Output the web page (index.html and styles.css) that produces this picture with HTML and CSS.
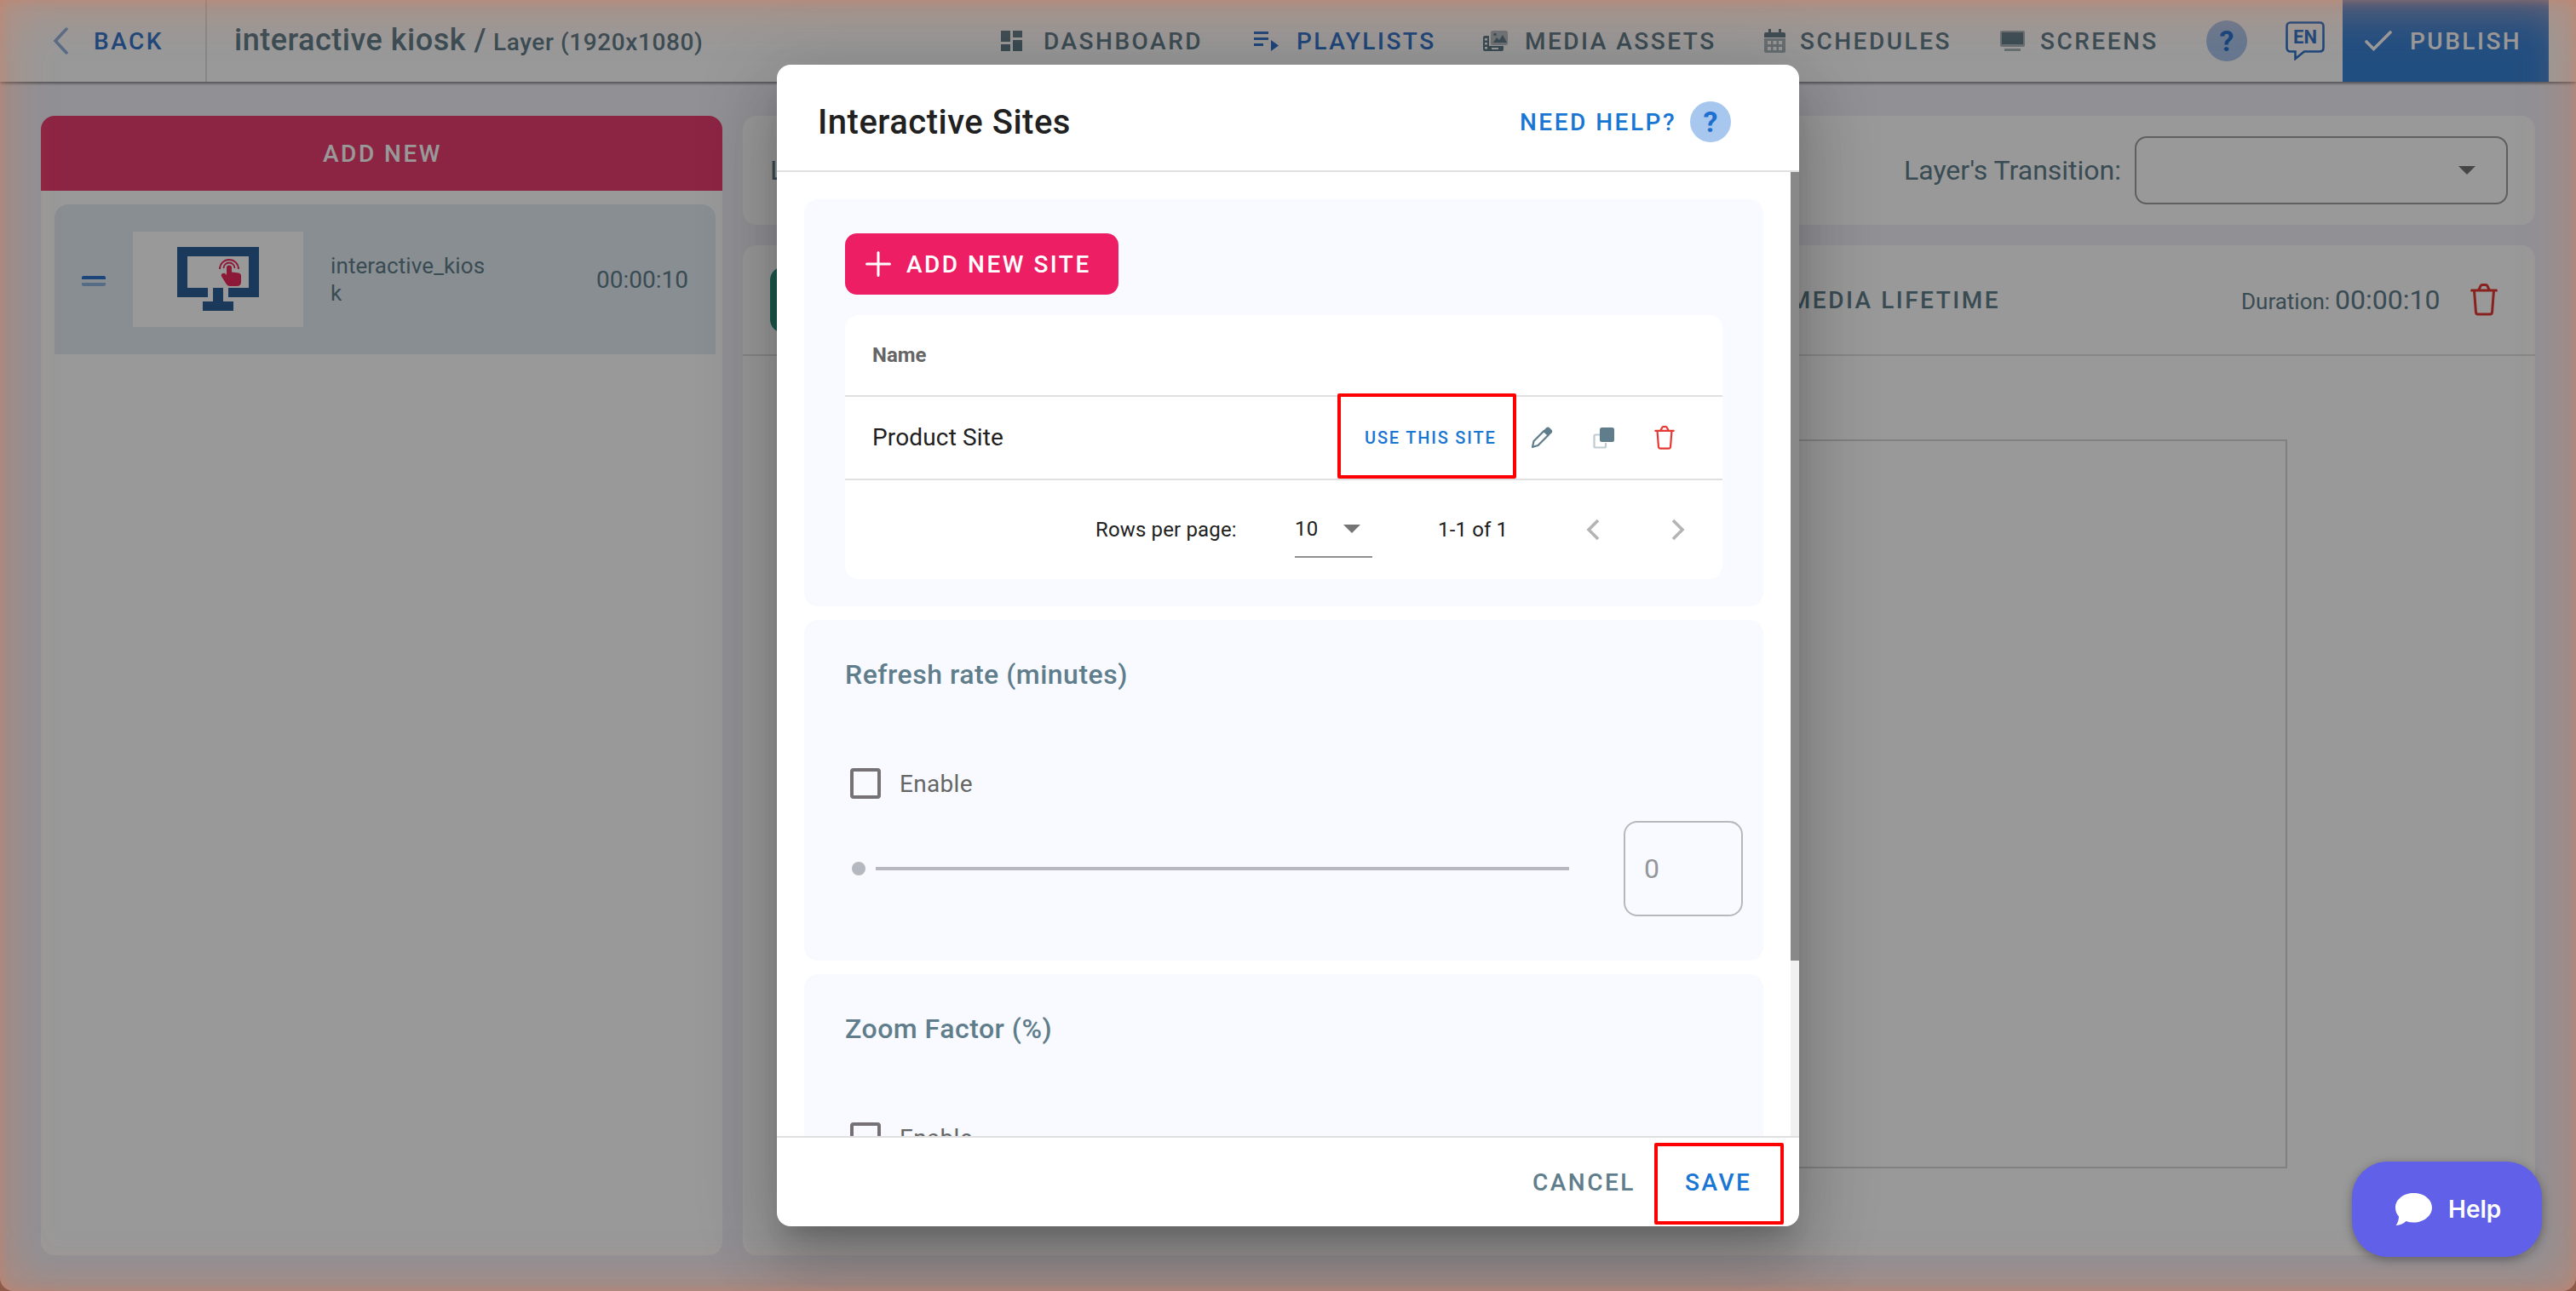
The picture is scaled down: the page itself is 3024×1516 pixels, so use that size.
FILE: index.html
```html
<!DOCTYPE html>
<html lang="en">
<head>
<meta charset="utf-8">
<title>Interactive Sites</title>
<link rel="stylesheet" href="styles.css">
</head>
<body>
<svg class="defs" width="0" height="0">
  <symbol id="trash" viewBox="0 0 32 38"><path d="M1.5 8h29M4.500 8l2 26a2.500 2.500 0 0 0 2.500 2h14a2.500 2.500 0 0 0 2.500-2l2-26M10 7l2-4q.6-1.500 2-1.500h4q1.400 0 2 1.500l2 4" fill="none" stroke="currentColor" stroke-width="3" stroke-linecap="round"/></symbol>
</svg>
<div class="app">
  <header class="topbar">
    <div class="back"><svg width="18" height="32" viewBox="0 0 18 32"><path d="M16 2L3 16l13 14" fill="none" stroke="#8fb3de" stroke-width="3.500" stroke-linecap="round"/></svg><span>BACK</span></div>
    <div class="crumb"><span class="crumb-main">interactive kiosk /</span><span class="crumb-sub">Layer (1920x1080)</span></div>
    <nav class="nav">
      <div class="nav-item"><span class="nav-icon"><svg width="25" height="24" viewBox="0 0 25 24" fill="#607d8b"><path d="M0 0h11v13H0zM0 16h11v8H0zM14 0h11v8H14zM14 11h11v13H14z"/></svg></span>DASHBOARD</div>
      <div class="nav-item active"><span class="nav-icon"><svg width="30" height="24" viewBox="0 0 30 24" fill="#2f74cc"><path d="M0 1h17v3H0zM0 8h17v3H0zM0 15h11v3H0zM20 11l9 6.500-9 6.500z"/></svg></span>PLAYLISTS</div>
      <div class="nav-item"><span class="nav-icon"><svg width="30" height="26" viewBox="0 0 30 26"><rect x="10" y="1" width="20" height="17" rx="2.500" fill="#b4c1c7"/><path d="M13 15l4-6 3 3 4-6 5 9z" fill="#607d8b"/><circle cx="15" cy="5.500" r="1.800" fill="#607d8b"/><path fill-rule="evenodd" d="M3 7h5v12h17v4q0 2-2 2H3q-2 0-2-2V9q0-2 2-2zM3 10v2.500h3V10zM3 15v2.500h3V15zM3 20v2.500h3V20zM11 21v2h8v-2z" fill="#607d8b"/></svg></span>MEDIA ASSETS</div>
      <div class="nav-item"><span class="nav-icon cal"><svg width="25" height="28" viewBox="0 0 25 28"><path d="M5 0h3v4h9V0h3v4h3q2 0 2 2v4H0V6q0-2 2-2h3z" fill="#607d8b"/><path d="M0 11h25v15q0 2-2 2H2q-2 0-2-2z" fill="#a9b8bf"/><path d="M4 14h4v4H4zM10.500 14h4v4h-4zM17 14h4v4h-4zM4 21h4v4H4zM10.500 21h4v4h-4zM17 21h4v4h-4z" fill="#fff"/></svg></span>SCHEDULES</div>
      <div class="nav-item"><span class="nav-icon screen"><svg width="31" height="24" viewBox="0 0 31 24"><rect x="1" y="0" width="29" height="19" rx="2" fill="#a9b8bf"/><rect x="3" y="2" width="25" height="14" fill="#607d8b"/><path d="M6 21h19v3H6z" fill="#a9b8bf"/></svg></span>SCREENS</div>
    </nav>
    <div class="round-help">?</div>
    <div class="lang"><svg width="46" height="46" viewBox="0 0 46 46"><path d="M6 1.500h34q4.500 0 4.500 4.500v25q0 4.500-4.500 4.500H22L11.500 44v-8.500H6Q1.500 35.500 1.500 31V6Q1.500 1.500 6 1.500z" fill="none" stroke="#2f74cc" stroke-width="2.600"/></svg><span>EN</span></div>
    <div class="publish"><svg width="32" height="24" viewBox="0 0 32 24"><path d="M2 13l8.500 8.500L30 2" fill="none" stroke="#fff" stroke-width="3.600" stroke-linecap="round"/></svg><span>PUBLISH</span></div>
  </header>
  <main class="work">
    <aside class="side">
      <div class="add-new">ADD NEW</div>
      <div class="media-item">
        <span class="grip"></span>
        <span class="thumb"><svg width="96" height="75" viewBox="0 0 96 75"><path fill-rule="evenodd" fill="#2d6198" d="M0 0h96v59H60V48h24V11H12v37h24v11H0z"/><path fill="#2d6198" d="M42 48h12v16h12v11H30V64h12z"/><path d="M58 33q-2-3-4.500-2t-1.500 3.500l5 8q2 3.500 5 3.500h8q5 0 5-5v-7q0-3-3-3.500l-8-1V24q0-2.500-3-2.500t-3 2.500z" fill="#ea2a5c"/><path d="M50 26a11 11 0 1 1 22 0M54.500 25a6.500 6.500 0 1 1 13 0" fill="none" stroke="#ea2a5c" stroke-width="1.800"/></svg></span>
        <span class="media-name">interactive_kios<br>k</span>
        <span class="media-time">00:00:10</span>
      </div>
    </aside>
    <section class="stage">
      <div class="bar layer-bar">
        <span class="layer-name">Layer</span>
        <span class="trans-label">Layer's Transition:</span>
        <span class="trans-select"><i class="caret"></i></span>
      </div>
      <div class="canvas-panel">
        <div class="bar media-bar">
          <span class="teal-btn"></span>
          <span class="lifetime">MEDIA LIFETIME</span>
          <span class="dur-label">Duration:</span>
          <span class="dur-value">00:00:10</span>
          <svg class="red" width="32" height="38"><use href="#trash"/></svg>
        </div>
        <div class="canvas"></div>
      </div>
    </section>
  </main>
</div>
<div class="scrim"></div>
<div class="dialog">
  <div class="dialog-head">
    <h1>Interactive Sites</h1>
    <span class="need">NEED HELP?</span>
    <span class="round-help">?</span>
  </div>
  <div class="dialog-body">
    <div class="cards">
      <section class="card sites">
        <button class="add-site"><svg width="30" height="30" viewBox="0 0 30 30"><path d="M15 1.500v27M1.500 15h27" stroke="#fff" stroke-width="3" stroke-linecap="round"/></svg>ADD NEW SITE</button>
        <div class="table">
          <div class="thead">Name</div>
          <div class="trow">
            <span class="site-name">Product Site</span>
            <span class="use">USE THIS SITE</span>
            <svg class="pencil" width="26" height="26" viewBox="0 0 26 26"><path d="M2 24l1.500-7L15.500 5l5 5L8.500 22z" fill="none" stroke="#607d8b" stroke-width="2.200" stroke-linejoin="round"/><path d="M14.500 5l3.500-3.500q2-2 4.200 0l2 2.100q2 2.100 0 4.100L20.500 11z" fill="#607d8b"/></svg>
            <svg class="copy" width="25" height="26" viewBox="0 0 25 26"><path d="M8 9.500H3q-1.500 0-1.500 1.500v12q0 1.500 1.500 1.500h10.500q1.500 0 1.500-1.500v-4" fill="none" stroke="#bfcbd1" stroke-width="2.200"/><rect x="8" y="1" width="17" height="17" rx="2.500" fill="#607d8b"/></svg>
            <svg class="red" width="24" height="28"><use href="#trash"/></svg>
          </div>
          <div class="pager">
            <span class="rpp">Rows per page:</span>
            <span class="rpp-select">10<i class="caret"></i></span>
            <span class="range">1-1 of 1</span>
            <svg class="prev" width="16" height="26" viewBox="0 0 16 26"><path d="M14 2L3 13l11 11" fill="none" stroke="#b4b4b4" stroke-width="3.600"/></svg>
            <svg class="next" width="16" height="26" viewBox="0 0 16 26"><path d="M2 2l11 11L2 24" fill="none" stroke="#b4b4b4" stroke-width="3.600"/></svg>
          </div>
        </div>
      </section>
      <section class="card">
        <h2>Refresh rate (minutes)</h2>
        <label class="check"><i></i>Enable</label>
        <div class="slider"><i class="knob"></i><i class="track"></i><span class="num">0</span></div>
      </section>
      <section class="card">
        <h2>Zoom Factor (%)</h2>
        <label class="check"><i></i>Enable</label>
      </section>
    </div>
    <div class="scrollbar"><i></i></div>
  </div>
  <div class="dialog-foot"><span class="cancel">CANCEL</span><span class="save">SAVE</span></div>
  <i class="mark mark-use"></i>
  <i class="mark mark-save"></i>
</div>
<div class="glow"></div>
<div class="help-fab"><svg width="43" height="38" viewBox="0 0 43 38"><path d="M21.500 0C33.500 0 43 7.500 43 17S33.500 34.500 21.500 34.500q-5 0-9-1.500Q8 37.500.500 38q3.500-4.500 3.500-10.500Q0 23 0 17C0 7.500 9.500 0 21.500 0z" fill="#fff"/></svg><span>Help</span></div>
</body>
</html>
```
FILE: styles.css
```css
* { box-sizing: border-box; }
body { margin: 0; width: 3024px; height: 1516px; overflow: hidden; position: relative; font-family: Roboto, sans-serif; color: #607d8b; background: #f1f1f9; }
span, i { display: block; white-space: nowrap; }
svg { flex: none; display: block; }
h1, h2 { margin: 0; font-weight: 500; white-space: nowrap; }
.defs { position: absolute; }
.red { color: #e53935; }

.app { height: 1516px; display: flex; flex-direction: column; }
.topbar { height: 96px; flex: none; display: flex; align-items: center; background: #fff; box-shadow: 0 2px 3px rgba(0,0,0,.45); font-size: 28px; font-weight: 500; letter-spacing: 2.5px; }
.back { width: 243px; height: 96px; display: flex; align-items: center; gap: 30px; padding-left: 62px; border-right: 2px solid #e0e0e0; color: #2f74cc; }
.crumb { width: 932px; display: flex; align-items: baseline; gap: 8px; padding-left: 32px; margin-top: -2px; }
.crumb-main { font-size: 36px; font-weight: 500; letter-spacing: .5px; }
.crumb-sub { font-size: 28px; font-weight: 500; letter-spacing: .6px; }
.nav { width: 1415px; display: grid; grid-template-columns: 297px 268px 323px 282px 245px; }
.nav-item { display: flex; align-items: center; white-space: nowrap; }
.nav-icon { width: 50px; }
.nav-icon.cal { padding-left: 8px; }
.nav-icon.screen { padding-left: 2px; }
.active { color: #2f74cc; }
.round-help { width: 48px; height: 48px; border-radius: 50%; background: #a8c7ee; color: #1e6fd0; font: 700 34px/48px Roboto, sans-serif; text-align: center; letter-spacing: 0; }
.lang { width: 46px; height: 46px; margin-left: 45px; position: relative; }
.lang span { position: absolute; inset: 0 0 auto 0; text-align: center; color: #2f74cc; font-size: 22px; line-height: 37px; letter-spacing: 0; font-weight: 700; }
.publish { width: 242px; height: 96px; margin-left: 21px; padding-left: 26px; display: flex; align-items: center; gap: 21px; background: #3883d6; color: #fff; }

.work { flex: 1; display: flex; gap: 24px; padding: 40px 48px 42px; }
.side { width: 800px; background: #fff; border-radius: 16px; overflow: hidden; }
.add-new { height: 88px; line-height: 89px; text-align: center; background: #e93f70; color: #fff; font-size: 28px; font-weight: 500; letter-spacing: 2.5px; padding-left: 2px; }
.media-item { margin: 16px 8px 0 16px; height: 176px; background: #e5edf3; border-radius: 16px 16px 0 0; display: flex; align-items: center; }
.grip { width: 28px; height: 12px; margin: 3px 0 0 32px; border-top: 4px solid #2f74cc; border-bottom: 4px solid #8fb3de; border-radius: 2px; }
.thumb { width: 200px; height: 112px; margin-left: 32px; background: #fff; display: flex; justify-content: center; padding-top: 18px; }
.media-name { width: 312px; margin-left: 32px; font-size: 26px; line-height: 32px; letter-spacing: .1px; }
.media-time { font-size: 28px; }
.stage { flex: 1; display: flex; flex-direction: column; gap: 24px; }
.bar { height: 128px; display: flex; align-items: center; }
.layer-bar { background: #fff; border-radius: 16px; padding: 0 32px; font-size: 32px; }
.layer-name { width: 1331px; }
.trans-label { width: 271px; }
.trans-select { width: 438px; height: 80px; border: 2px solid #9e9e9e; border-radius: 14px; display: flex; align-items: center; justify-content: flex-end; padding-right: 36px; }
.caret { border: 10px solid transparent; border-top-color: #757575; border-bottom: 0; }
.canvas-panel { flex: 1; background: #fff; border-radius: 16px; }
.media-bar { height: 130px; border-bottom: 2px solid #e0e0e0; padding-left: 32px; }
.teal-btn { width: 400px; height: 78px; background: #309682; border-radius: 16px; }
.lifetime { width: 1060px; text-align: right; margin: 0 283px 0 -16px; font-size: 28px; font-weight: 500; letter-spacing: 2.5px; }
.dur-label { width: 110px; font-size: 26px; margin-top: 4px; }
.dur-value { width: 159px; font-size: 32px; }
.canvas { width: 1524px; height: 856px; margin: 98px 0 0 289px; border: 2px solid #d8d8d8; }

.scrim { position: absolute; inset: 0; background: rgba(0,0,0,.4); }
.glow { position: absolute; inset: 0; pointer-events: none; border-radius: 0 0 16px 16px; box-shadow: 0 0 0 20px #8f5a48, inset 0 0 12px rgba(210,125,95,.5), inset 0 0 60px rgba(210,130,100,.65); }

.dialog { position: absolute; left: 912px; top: 76px; width: 1200px; height: 1364px; background: #fff; border-radius: 16px; display: flex; flex-direction: column; box-shadow: 0 22px 30px -14px rgba(0,0,0,.2), 0 48px 76px 6px rgba(0,0,0,.14), 0 18px 92px 16px rgba(0,0,0,.12); }
.dialog-head { height: 126px; flex: none; display: flex; align-items: center; padding: 10px 80px 0 48px; border-bottom: 2px solid #e0e0e0; }
.dialog-head h1 { flex: 1; color: #212121; font-size: 40px; letter-spacing: .5px; }
.need { width: 200px; color: #1976d2; font-size: 28px; font-weight: 500; letter-spacing: 2.5px; }
.dialog-body { height: 1132px; flex: none; display: flex; overflow: hidden; }
.cards { width: 1190px; padding: 32px 32px 0; display: flex; flex-direction: column; gap: 16px; }
.card { height: 400px; flex: none; background: #f8faff; border-radius: 16px; padding: 45px 48px; }
.sites { height: 478px; padding: 40px 48px; }
.add-site { display: flex; align-items: center; gap: 18px; width: 321px; height: 72px; padding: 0 0 0 24px; margin: 0 0 24px; border: 0; border-radius: 14px; background: #ee1e64; color: #fff; font: 500 28px Roboto, sans-serif; letter-spacing: 2.5px; white-space: nowrap; }
.table { width: 1030px; height: 310px; background: #fff; border-radius: 16px; }
.thead { height: 96px; line-height: 94px; padding-left: 32px; border-bottom: 2px solid #e0e0e0; font-size: 24px; font-weight: 700; color: #666; }
.trow { height: 98px; display: flex; align-items: center; padding-left: 32px; border-bottom: 2px solid #e0e0e0; }
.site-name { width: 578px; margin-top: -1px; font-size: 28px; letter-spacing: .15px; color: #212121; }
.use { width: 195px; color: #1976d2; font-size: 20px; font-weight: 500; letter-spacing: 1.8px; }
.pencil { margin-right: 47px; }
.copy { margin-right: 47px; }
.pager { height: 116px; display: flex; align-items: center; padding-left: 294px; font-size: 24px; letter-spacing: .15px; color: #212121; }
.rpp { width: 234px; }
.rpp-select { width: 91px; height: 66px; display: flex; align-items: center; gap: 30px; border-bottom: 2px solid #909090; }
.range { width: 174px; margin-left: 77px; }
.prev { margin-right: 84px; }
.card h2 { height: 38px; line-height: 38px; font-size: 32px; letter-spacing: .5px; }
.check { display: flex; align-items: center; gap: 22px; height: 36px; margin: 91px 0 0 6px; font-size: 28px; letter-spacing: .3px; color: #666; }
.check i { width: 36px; height: 36px; border: 4px solid #757175; border-radius: 4px; }
.slider { display: flex; align-items: center; height: 112px; margin: 26px -24px 0 8px; }
.knob { width: 16px; height: 16px; border-radius: 50%; background: #b5b8be; }
.track { width: 814px; height: 4px; margin: 0 64px 0 12px; background: #b5b8be; }
.num { width: 140px; height: 112px; line-height: 108px; padding-left: 22px; border: 2px solid #b5b8be; border-radius: 16px; font-size: 32px; color: #93969a; }
.scrollbar { width: 10px; background: #f1f1f1; }
.scrollbar i { height: 926px; background: #888; }
.dialog-foot { flex: 1; display: flex; align-items: center; padding-left: 887px; border-top: 2px solid #e0e0e0; font-size: 28px; font-weight: 500; letter-spacing: 2.5px; }
.cancel { width: 179px; }
.save { color: #1976d2; }
.mark { position: absolute; border: 4px solid #f00; border-radius: 2px; }
.mark-use { left: 658px; top: 386px; width: 210px; height: 100px; }
.mark-save { left: 1030px; top: 1266px; width: 152px; height: 96px; }

.help-fab { position: absolute; left: 2761px; top: 1364px; width: 223px; height: 112px; padding-left: 51px; border-radius: 42px; background: #6060e8; color: #fff; display: flex; align-items: center; gap: 19px; font: 600 28px Inter, sans-serif; box-shadow: 0 3px 12px rgba(0,0,0,.35); }
```
